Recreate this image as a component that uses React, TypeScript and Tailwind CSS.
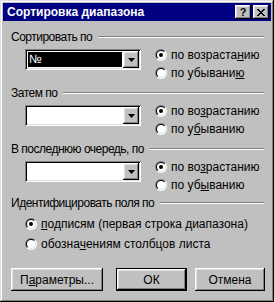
import React from "react";

const raised =
  "shadow-[inset_-1px_-1px_#000,inset_1px_1px_#fff,inset_-2px_-2px_#808080,inset_2px_2px_#dfdfdf]";
const sunken =
  "shadow-[inset_1px_1px_#808080,inset_-1px_-1px_#fff,inset_2px_2px_#000,inset_-2px_-2px_#dfdfdf]";

function Radio({ checked }: { checked?: boolean }) {
  return (
    <svg width="12" height="12" viewBox="0 0 12 12" className="shrink-0">
      <defs>
        <linearGradient id="rg1" x1="0" y1="0" x2="1" y2="1">
          <stop offset="0.5" stopColor="#808080" />
          <stop offset="0.5" stopColor="#ffffff" />
        </linearGradient>
        <linearGradient id="rg2" x1="0" y1="0" x2="1" y2="1">
          <stop offset="0.5" stopColor="#000000" />
          <stop offset="0.5" stopColor="#dfdfdf" />
        </linearGradient>
      </defs>
      <circle cx="6" cy="6" r="6" fill="url(#rg1)" />
      <circle cx="6" cy="6" r="5" fill="url(#rg2)" />
      <circle cx="6" cy="6" r="4" fill="#fff" />
      {checked && <circle cx="6" cy="6" r="2" fill="#000" />}
    </svg>
  );
}

function RadioRow({
  checked,
  children,
}: {
  checked?: boolean;
  children: React.ReactNode;
}) {
  return (
    <div className="h-[16px] flex items-center gap-[4px] whitespace-nowrap">
      <Radio checked={checked} />
      <span className="leading-[14px]">{children}</span>
    </div>
  );
}

function U({ children }: { children: React.ReactNode }) {
  return <span className="underline underline-offset-[1px]">{children}</span>;
}

function Combo({ value }: { value?: string }) {
  return (
    <div className={`w-[116px] h-[21px] bg-white ${sunken} p-[2px] flex shrink-0`}>
      <div className="flex-1 p-[1px] flex">
        {value ? (
          <div className="flex-1 bg-black text-white pl-[1px] leading-[15px]">{value}</div>
        ) : null}
      </div>
      <div
        className={`w-[16px] h-[17px] bg-[#c0c0c0] ${raised} flex items-center justify-center`}
      >
        <svg width="7" height="4" viewBox="0 0 7 4">
          <path d="M0 0h7l-3.5 4z" fill="#000" />
        </svg>
      </div>
    </div>
  );
}

function Header({ children, mt }: { children: React.ReactNode; mt: string }) {
  return (
    <div className={`h-[14px] flex items-center pl-[8px] pr-[7px] ${mt}`}>
      <span className="whitespace-nowrap leading-[14px] tracking-[-0.5px]">{children}</span>
      <div className="flex-1 ml-[6px] h-0 border-t border-b border-t-[#808080] border-b-white" />
    </div>
  );
}

function SortGroup({
  title,
  mt,
  value,
  asc,
  desc,
}: {
  title: React.ReactNode;
  mt: string;
  value?: string;
  asc: React.ReactNode;
  desc: React.ReactNode;
}) {
  return (
    <>
      <Header mt={mt}>{title}</Header>
      <div className="flex pl-[22px] h-[37px]">
        <div className="mt-[5px]">
          <Combo value={value} />
        </div>
        <div className="ml-[14px] mt-[3px] flex flex-col gap-[2px]">
          <RadioRow checked>{asc}</RadioRow>
          <RadioRow>{desc}</RadioRow>
        </div>
      </div>
    </>
  );
}

function Button({
  children,
  w,
  def,
  cls,
}: {
  children: React.ReactNode;
  w: string;
  def?: boolean;
  cls?: string;
}) {
  const sh = def
    ? "shadow-[inset_0_0_0_1px_#000,inset_-2px_-2px_#000,inset_2px_2px_#fff,inset_-3px_-3px_#808080,inset_3px_3px_#dfdfdf]"
    : raised;
  return (
    <div
      className={`${w} h-[23px] bg-[#c0c0c0] ${sh} flex items-center justify-center leading-[14px] ${cls ?? ""}`}
    >
      {children}
    </div>
  );
}

export default function App() {
  return (
    <div
      className="w-[274px] h-[302px] bg-[#c0c0c0] p-[3px] flex flex-col text-[12px] text-black shadow-[inset_-1px_-1px_#000,inset_1px_1px_#dfdfdf,inset_-2px_-2px_#808080,inset_2px_2px_#fff]"
      style={{ fontFamily: '"Liberation Sans", Arial, sans-serif' }}
    >
      <div className="h-[18px] bg-[#000080] flex items-center pl-[4px] pr-[2px] shrink-0">
        <span className="text-white font-bold text-[12px] flex-1 whitespace-nowrap">
          Сортировка диапазона
        </span>
        <div
          className={`w-[16px] h-[14px] bg-[#c0c0c0] ${raised} flex items-center justify-center font-bold text-[11px] leading-[11px]`}
        >
          ?
        </div>
        <div
          className={`ml-[2px] w-[16px] h-[14px] bg-[#c0c0c0] ${raised} flex items-center justify-center`}
        >
          <svg width="8" height="7" viewBox="0 0 8 7">
            <path
              d="M0 0h2v1h1v1h2V1h1V0h2v1H7v1H6v1H5v1h1v1h1v1h1v1H6V6H5V5H3v1H2v1H0V6h1V5h1V4h1V3H2V2H1V1H0z"
              fill="#000"
            />
          </svg>
        </div>
      </div>

      <SortGroup
        mt="mt-[9px]"
        title="Сортировать по"
        value="№"
        asc={
          <>
            по возраста<U>н</U>ию
          </>
        }
        desc={
          <>
            по убывани<U>ю</U>
          </>
        }
      />
      <SortGroup
        mt="mt-[5px]"
        title="Затем по"
        asc={
          <>
            по во<U>з</U>растанию
          </>
        }
        desc={
          <>
            по у<U>б</U>ыванию
          </>
        }
      />
      <SortGroup
        mt="mt-[5px]"
        title="В последнюю очередь, по"
        asc={
          <>
            по во<U>з</U>растанию
          </>
        }
        desc={
          <>
            по уб<U>ы</U>ванию
          </>
        }
      />

      <Header mt="mt-[3px]">Идентифицировать поля по</Header>
      <div className="pl-[22px] mt-[6px] flex flex-col gap-[4px]">
        <RadioRow checked>
          <U>п</U>одписям (первая строка диапазона)
        </RadioRow>
        <RadioRow>
          обозна<U>ч</U>ениям столбцов листа
        </RadioRow>
      </div>

      <div className="flex pl-[8px] mt-[16px]">
        <Button w="w-[92px]">
          П<U>а</U>раметры...
        </Button>
        <Button w="w-[71px]" def cls="ml-[13px]">
          ОК
        </Button>
        <Button w="w-[70px]" cls="ml-[8px]">
          Отмена
        </Button>
      </div>
    </div>
  );
}
